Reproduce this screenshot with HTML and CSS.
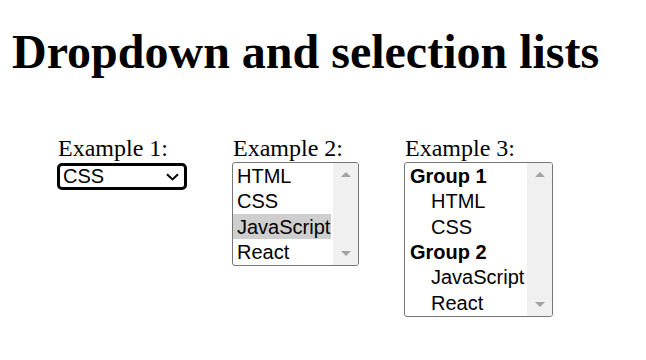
FILE: index.html
```html
<!DOCTYPE html>
<html lang="en">
<head>
<meta charset="utf-8">
<title>Dropdown and selection lists</title>
<link rel="stylesheet" href="styles.css">
</head>
<body>
<h1 class="title">Dropdown and selection lists</h1>
<div class="examples">
  <div class="example ex1">
    <div class="label">Example 1:</div>
    <div class="dropdown">
      <span class="value">CSS</span>
      <svg class="chevron" width="13" height="8" viewBox="0 0 13 8"><polyline points="1,1.2 6.5,6.4 12,1.2" fill="none" stroke="#000" stroke-width="2"/></svg>
    </div>
  </div>
  <div class="example ex2">
    <div class="label">Example 2:</div>
    <div class="listbox lb2">
      <div class="options">
        <div class="opt">HTML</div>
        <div class="opt">CSS</div>
        <div class="opt selected">JavaScript</div>
        <div class="opt">React</div>
      </div>
      <div class="scrollbar"><span class="arrow up"></span><span class="arrow down"></span></div>
    </div>
  </div>
  <div class="example ex3">
    <div class="label">Example 3:</div>
    <div class="listbox lb3">
      <div class="options">
        <div class="opt group">Group 1</div>
        <div class="opt sub">HTML</div>
        <div class="opt sub">CSS</div>
        <div class="opt group">Group 2</div>
        <div class="opt sub">JavaScript</div>
        <div class="opt sub">React</div>
      </div>
      <div class="scrollbar"><span class="arrow up"></span><span class="arrow down"></span></div>
    </div>
  </div>
</div>
</body>
</html>
```

FILE: styles.css
```css
html, body {
  margin: 0;
  padding: 0;
  background: #fff;
  color: #000;
}
body {
  font-family: "Liberation Serif", "Times New Roman", serif;
}
.title {
  margin: 24px 0 0 12px;
  font-size: 48px;
  line-height: 55px;
  font-weight: bold;
}
.examples {
  display: flex;
  align-items: flex-start;
  gap: 45px;
  margin-top: 55px;
  padding-left: 57px;
}
.example {
  display: flex;
  flex-direction: column;
  align-items: flex-start;
}
.label {
  font-size: 24px;
  line-height: 28px;
  padding-left: 1px;
}
.dropdown {
  box-sizing: border-box;
  width: 130px;
  height: 27px;
  margin-top: 1px;
  border: 3px solid #000;
  border-radius: 5px;
  display: flex;
  align-items: center;
  justify-content: space-between;
  padding: 0 5px 0 3px;
  font-family: "Liberation Sans", Arial, sans-serif;
  font-size: 20px;
  line-height: 21px;
}
.chevron {
  display: block;
}
.listbox {
  box-sizing: border-box;
  display: flex;
  border: 1px solid #767676;
  border-radius: 3px;
  font-family: "Liberation Sans", Arial, sans-serif;
  font-size: 20px;
  overflow: hidden;
}
.lb2 {
  width: 127px;
  height: 104px;
}
.lb3 {
  width: 149px;
  height: 155px;
}
.options {
  flex: 1;
  padding-right: 2px;
}
.opt {
  height: 25.33px;
  line-height: 26px;
  padding-left: 4px;
  white-space: nowrap;
}
.opt.selected {
  background: #cecece;
}
.opt.group {
  font-weight: bold;
}
.lb3 .opt.group {
  padding-left: 5px;
}
.lb3 .opt.sub {
  padding-left: 26px;
}
.scrollbar {
  width: 25px;
  background: #f0f0f0;
  display: flex;
  flex-direction: column;
  align-items: center;
  justify-content: space-between;
  padding: 9px 0 9px;
  box-sizing: border-box;
}
.arrow {
  width: 0;
  height: 0;
  border-left: 5px solid transparent;
  border-right: 5px solid transparent;
}
.arrow.up {
  border-bottom: 5px solid #a3a3a3;
}
.arrow.down {
  border-top: 5px solid #a3a3a3;
}
```
